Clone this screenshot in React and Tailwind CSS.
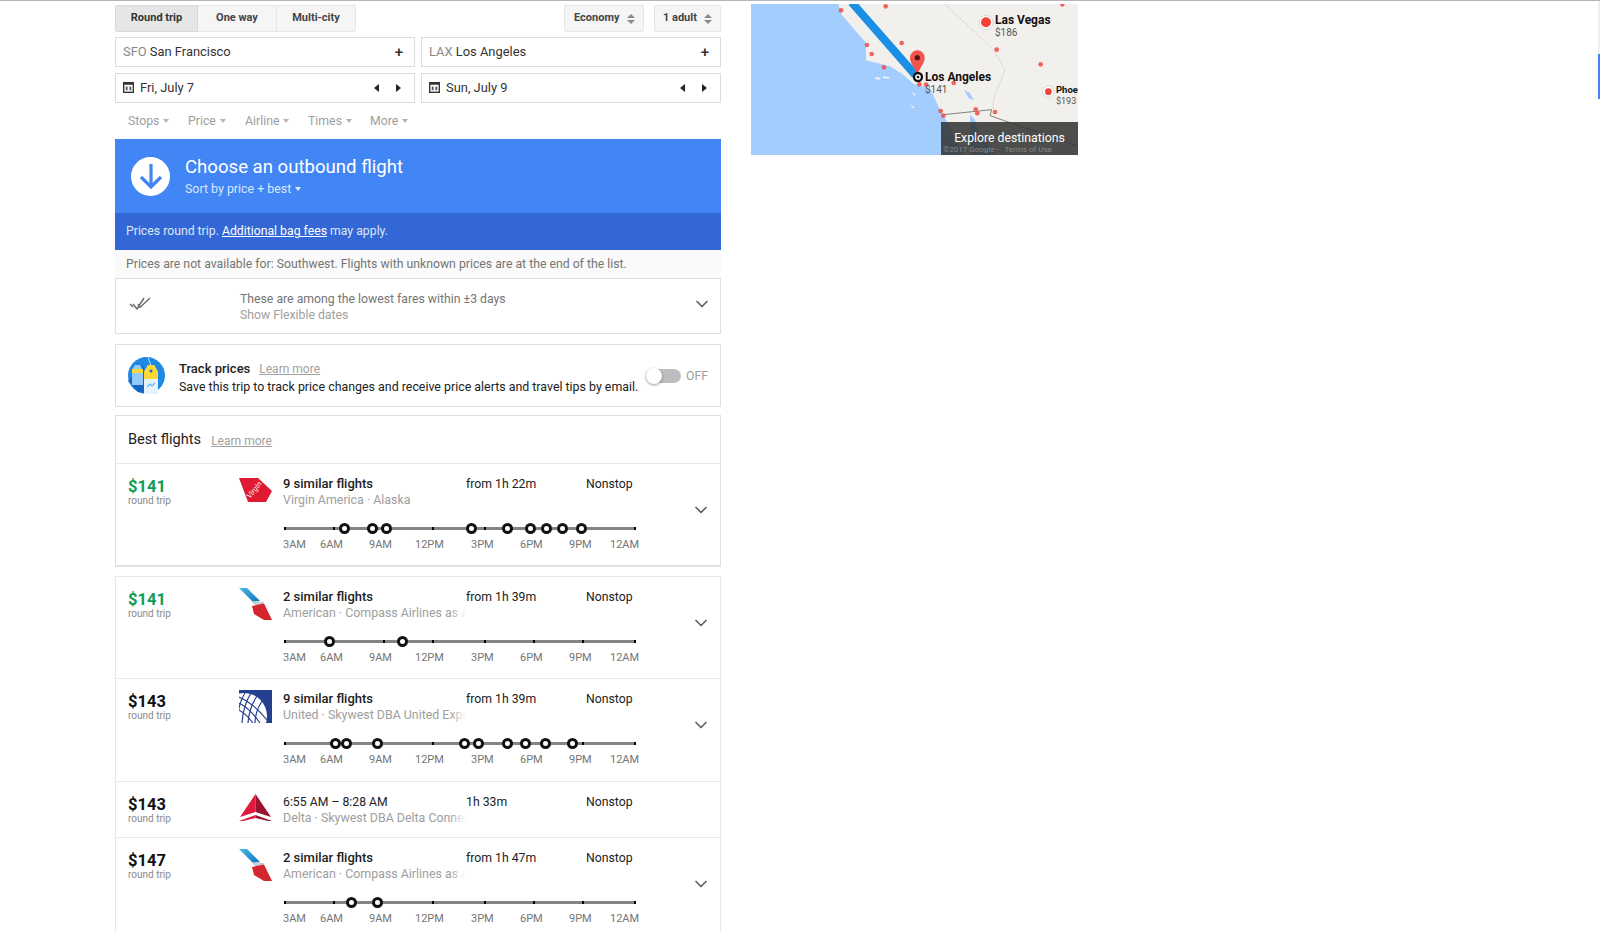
import React from 'react';
import { ChevronDown } from 'lucide-react';

const labelWidths = ['w-[37px]', 'w-[49px]', 'w-[46px]', 'w-[56px]', 'w-[49px]', 'w-[49px]', 'w-[41px]', 'w-[30px]'];
const labelNames = ['3AM', '6AM', '9AM', '12PM', '3PM', '6PM', '9PM', '12AM'];

const flights = [
  { price: '$141', green: true, logo: 'virgin', title: '9 similar flights', sub: 'Virgin America · Alaska', time: 'from 1h 22m', h: 'h-[101px]',
    ticks: [0, 49, 99, 148, 200, 249, 298, 350], stops: [60, 88, 102, 187, 223, 246, 262, 278, 297] },
  { price: '$141', green: true, logo: 'aa', title: '2 similar flights', sub: 'American · Compass Airlines as American Eagle', time: 'from 1h 39m', h: 'h-[102px]',
    ticks: [0, 99, 148, 200, 249, 298, 350], stops: [45, 118] },
  { price: '$143', logo: 'united', title: '9 similar flights', sub: 'United · Skywest DBA United Express', time: 'from 1h 39m', h: 'h-[103px]',
    ticks: [0, 148, 298, 350], stops: [51, 62, 93, 180, 194, 223, 241, 261, 288] },
  { price: '$143', logo: 'delta', title: '6:55 AM – 8:28 AM', sub: 'Delta · Skywest DBA Delta Connection', time: '1h 33m', h: 'h-[56px]' },
  { price: '$147', logo: 'aa', title: '2 similar flights', sub: 'American · Compass Airlines as American Eagle', time: 'from 1h 47m', h: 'h-[101px]',
    ticks: [0, 49, 148, 200, 249, 298, 350], stops: [67, 93] },
];

function VirginLogo() {
  return (
    <svg width="33" height="24" viewBox="0 0 33 24" className="mt-[3px]">
      <polygon points="0,0 19,0 33,13 27,24 9,24" fill="#e01933" />
      <text x="11" y="21" fontSize="8" fontStyle="italic" fill="#fff" fontFamily="'Liberation Serif', serif" transform="rotate(-52 11 21)">Virgin</text>
    </svg>
  );
}

function AaLogo() {
  return (
    <svg width="33" height="32" viewBox="0 0 33 32">
      <defs>
        <linearGradient id="aablue" x1="0" y1="0" x2="1" y2="1">
          <stop offset="0" stopColor="#4db8dc" />
          <stop offset="1" stopColor="#0f74c4" />
        </linearGradient>
      </defs>
      <polygon points="0,0 8,0 21,13 14,14" fill="url(#aablue)" />
      <polygon points="12,13 25,14 24,17 16,17" fill="#c9ced3" />
      <polygon points="13,18 25,15.5 33,32 25,32 15,26" fill="#d3262e" />
    </svg>
  );
}

function UnitedLogo() {
  return (
    <svg width="33" height="33" viewBox="0 0 33 33">
      <defs>
        <clipPath id="ualogo"><rect width="33" height="33" /></clipPath>
      </defs>
      <rect width="33" height="33" fill="#25408f" />
      <g clipPath="url(#ualogo)" fill="none">
        <circle cx="5" cy="26" r="23" fill="#fff" />
        <g stroke="#25408f" strokeWidth="1.2">
          <path d="M-6 5 Q12 10 28 30" />
          <path d="M-6 11 Q8 14 21 33" />
          <path d="M-6 18 Q4 20 14 33" />
          <path d="M12 3 Q4 16 3 33" />
          <path d="M18 6 Q10 18 9 33" />
          <path d="M23 11 Q16 22 16 33" />
          <path d="M6 3 Q-1 14 -2 33" />
        </g>
      </g>
    </svg>
  );
}

function DeltaLogo() {
  return (
    <svg width="33" height="28" viewBox="0 0 33 28" className="mt-[1px]">
      <polygon points="16.5,0 1,23 16.5,18" fill="#e01a3c" />
      <polygon points="16.5,0 32,23 16.5,18" fill="#98142f" />
      <polygon points="0,27 16.5,21 16.5,24 4,27" fill="#e01a3c" />
      <polygon points="33,27 16.5,21 16.5,24 29,27" fill="#98142f" />
    </svg>
  );
}

const logos = { virgin: VirginLogo, aa: AaLogo, united: UnitedLogo, delta: DeltaLogo };

function Timeline({ ticks, stops }) {
  return (
    <div className="mt-[15px]">
      <div className="relative w-[352px] h-[11px] ml-[1px]">
        <div className="absolute left-0 right-0 top-[4px] h-[3px] bg-[#848484]" />
        {ticks.map((t) => (
          <div key={t} className="absolute top-[4px] w-[2px] h-[3px] bg-black" style={{ left: t }} />
        ))}
        {stops.map((s) => (
          <div key={s} className="absolute top-0 w-[11px] h-[11px] rounded-full border-[3px] border-[#111] bg-white" style={{ left: s - 5 }} />
        ))}
      </div>
      <div className="flex mt-[4px] text-[11px] leading-[14px] text-[#757575]">
        {labelNames.map((l, i) => (
          <span key={l} className={`${labelWidths[i]} shrink-0`}>{l}</span>
        ))}
      </div>
    </div>
  );
}

function FlightRow({ f, last }) {
  const Logo = logos[f.logo];
  return (
    <div className={`flex relative pl-[12px] ${f.h} ${last ? '' : 'border-b border-[#e8e8e8]'}`}>
      <div className="w-[111px] shrink-0 pt-[14px]">
        <div className={`text-[16.5px] leading-[18px] font-bold ${f.green ? 'text-[#0f9d58]' : 'text-[#111]'}`}>{f.price}</div>
        <div className="mt-[-1px] text-[10px] leading-[12px] text-[#8a8a8a]">round trip</div>
      </div>
      <div className="w-[44px] shrink-0 pt-[11px]">
        <Logo />
      </div>
      <div className="flex-1 pt-[12px]">
        <div className="flex text-[12.25px] leading-[16px] text-[#222]">
          <div className={`w-[183px] shrink-0 ${f.logo === 'delta' ? '' : 'text-[13px] font-medium'}`}>{f.title}</div>
          <div className="w-[120px] shrink-0">{f.time}</div>
          <div>Nonstop</div>
        </div>
        <div className="relative w-[183px] mt-[-1px] pt-[1px] overflow-hidden whitespace-nowrap text-[12.4px] leading-[16px] text-[#9e9e9e]">
          {f.sub}
          <div className="absolute right-0 top-0 bottom-0 w-[16px] bg-gradient-to-r from-transparent to-white" />
        </div>
        {f.ticks && <Timeline ticks={f.ticks} stops={f.stops} />}
      </div>
      {f.ticks && (
        <ChevronDown size={20} strokeWidth={2} className="absolute right-[9px] top-[36px] text-[#5f5f5f]" />
      )}
    </div>
  );
}

function CalendarIcon() {
  return (
    <svg width="11" height="11" viewBox="0 0 12 12" className="shrink-0">
      <rect x="0.75" y="0.75" width="10.5" height="10.5" fill="#fff" stroke="#333" strokeWidth="1.5" />
      <rect x="1" y="1" width="10" height="2" fill="#333" />
      <rect x="3" y="5" width="2" height="4" fill="#555" />
      <rect x="7" y="5" width="2" height="4" fill="#555" />
    </svg>
  );
}

function Caret() {
  return <span className="inline-block ml-[4px] mb-[2px] w-0 h-0 border-x-[3.5px] border-x-transparent border-t-[4px] border-t-[#b5b5b5]" />;
}

function Arrows() {
  return (
    <div className="flex items-center gap-[17px]">
      <span className="w-0 h-0 border-y-[4px] border-y-transparent border-r-[5px] border-r-[#222]" />
      <span className="w-0 h-0 border-y-[4px] border-y-transparent border-l-[5px] border-l-[#222]" />
    </div>
  );
}

function Updown() {
  return (
    <div className="flex flex-col gap-[2px]">
      <span className="w-0 h-0 border-x-[4px] border-x-transparent border-b-[4px] border-b-[#8a8a8a]" />
      <span className="w-0 h-0 border-x-[4px] border-x-transparent border-t-[4px] border-t-[#8a8a8a]" />
    </div>
  );
}

function MapPanel() {
  const dots = [[333, 32], [467, 20], [411, 136], [425, 163], [515, 130], [462, 203], [568, 254], [588, 255], [671, 250], [632, 334], [640, 348], [737, 329], [742, 341], [795, 337], [800, 150], [932, 194], [997, 14]];
  return (
    <div className="relative w-[327px] h-[151px] overflow-hidden bg-[#a3ccff] text-[#111]">
      <svg width="327" height="151" viewBox="63 13 981 453" className="block">
        <polygon points="325,13 335,45 372,88 408,130 408,182 480,200 520,225 550,252 600,265 625,320 640,345 665,395 700,466 1044,466 1044,13" fill="#f2f0ec" />
        <polygon points="435,232 452,234 450,240 437,239" fill="#f2f0ec" />
        <polygon points="458,230 478,232 476,237 460,236" fill="#f2f0ec" />
        <polygon points="545,276 558,286 552,288" fill="#f2f0ec" />
        <polygon points="540,314 555,324 548,326" fill="#f2f0ec" />
        <polygon points="702,270 720,280 732,302 716,296" fill="#a3ccff" />
        <polygon points="720,345 735,360 745,395 800,466 720,466" fill="#a3ccff" />
        <path d="M645 13 L790 150 L825 210 L790 300 L790 330" fill="none" stroke="#c2c0bb" strokeWidth="2" strokeDasharray="6 3" />
        <path d="M640 345 L785 330 L780 348 L1044 440" fill="none" stroke="#6e6e6e" strokeWidth="2.5" />
        <line x1="365" y1="8" x2="556" y2="226" stroke="#1a8fe3" strokeWidth="24" />
        {dots.map(([x, y]) => (
          <circle key={`${x}-${y}`} cx={x} cy={y} r="7" fill="#ef5350" opacity="0.9" />
        ))}
        <circle cx="768" cy="68" r="21" fill="#fff" stroke="#c4c4c4" strokeWidth="2" />
        <circle cx="768" cy="68" r="15" fill="#f44336" />
        <circle cx="955" cy="276" r="17" fill="#fff" stroke="#c4c4c4" strokeWidth="2" />
        <circle cx="955" cy="276" r="10" fill="#f44336" />
        <path d="M562 225 C552 200 540 190 540 174 A22 22 0 0 1 584 174 C584 190 572 200 562 225 Z" fill="#f0544c" />
        <circle cx="562" cy="174" r="8" fill="#5a1410" />
        <circle cx="564" cy="232" r="12" fill="#fff" stroke="#111" strokeWidth="7" />
        <circle cx="564" cy="232" r="4" fill="#111" />
      </svg>
      <div className="absolute left-[244px] top-[10px] text-[12px] leading-[13px] font-bold">Las Vegas</div>
      <div className="absolute left-[244px] top-[23px] text-[10px] leading-[11px] text-[#555]">$186</div>
      <div className="absolute left-[174px] top-[66px] text-[12px] leading-[14px] font-bold">Los Angeles</div>
      <div className="absolute left-[174px] top-[80px] text-[10px] leading-[11px] text-[#555]">$141</div>
      <div className="absolute left-[305px] top-[80px] text-[9.5px] leading-[12px] font-bold">Phoe</div>
      <div className="absolute left-[305px] top-[92px] text-[9px] leading-[11px] text-[#555]">$193</div>
      <div className="absolute left-[190px] right-0 bottom-0 h-[33px] bg-[#303030]/85 flex justify-center pt-[8px] text-white text-[12.25px] leading-[16px]">
        Explore destinations
      </div>
      <div className="absolute left-[192px] right-0 bottom-0 h-[10px] text-[8px] leading-[10px] text-[#888] whitespace-nowrap">©2017 Google - &nbsp; Terms of Use</div>
    </div>
  );
}

export default function App() {
  return (
    <div className="relative w-[1600px] h-[932px] overflow-hidden bg-white border-t border-[#b5b5b5] font-['Roboto',sans-serif]">
      {/* scrollbar stub on the right edge */}
      <div className="absolute right-0 top-0 w-[2px] h-[53px] bg-[#efefef]" />
      <div className="absolute right-0 top-[53px] w-[2px] h-[45px] bg-[#4285f4]" />

      <div className="flex items-start pl-[115px]">
        <div className="w-[606px] shrink-0 pt-[4px]">
          {/* trip type + cabin */}
          <div className="flex justify-between h-[27px] text-[11px] font-bold text-[#444]">
            <div className="flex">
              <div className="w-[83px] flex items-center justify-center bg-[#e6e6e6] border border-[#d8d8d8] rounded-l-[2px] text-[#333]">Round trip</div>
              <div className="w-[79px] flex items-center justify-center bg-[#f5f5f5] border-y border-r border-[#e6e6e6]">One way</div>
              <div className="w-[79px] flex items-center justify-center bg-[#f5f5f5] border-y border-r border-[#e6e6e6] rounded-r-[2px]">Multi-city</div>
            </div>
            <div className="flex gap-[10px]">
              <div className="w-[80px] flex items-center justify-between pl-[9px] pr-[8px] bg-[#f5f5f5] border border-[#e6e6e6] rounded-[2px]">Economy <Updown /></div>
              <div className="w-[67px] flex items-center justify-between pl-[8px] pr-[8px] bg-[#f5f5f5] border border-[#e6e6e6] rounded-[2px]">1 adult <Updown /></div>
            </div>
          </div>

          {/* from / to */}
          <div className="flex gap-[6px] mt-[5px] text-[12.9px] text-[#333]">
            <div className="w-[300px] h-[30px] flex items-center justify-between pl-[7px] pr-[11px] border border-[#dcdcdc]">
              <div><span className="text-[#888]">SFO</span> San Francisco</div>
              <span className="text-[15px] font-medium">+</span>
            </div>
            <div className="w-[300px] h-[30px] flex items-center justify-between pl-[7px] pr-[11px] border border-[#dcdcdc]">
              <div><span className="text-[#888]">LAX</span> Los Angeles</div>
              <span className="text-[15px] font-medium">+</span>
            </div>
          </div>
          <div className="flex gap-[6px] mt-[6px] text-[12.9px] text-[#333]">
            <div className="w-[300px] h-[30px] flex items-center justify-between pl-[7px] pr-[13px] border border-[#dcdcdc]">
              <div className="flex items-center gap-[6px]"><CalendarIcon /> Fri, July 7</div>
              <Arrows />
            </div>
            <div className="w-[300px] h-[30px] flex items-center justify-between pl-[7px] pr-[13px] border border-[#dcdcdc]">
              <div className="flex items-center gap-[6px]"><CalendarIcon /> Sun, July 9</div>
              <Arrows />
            </div>
          </div>

          {/* filters */}
          <div className="flex h-[36px] items-center pl-[13px] text-[12.3px] text-[#9e9e9e]">
            <div className="w-[60px]">Stops<Caret /></div>
            <div className="w-[57px]">Price<Caret /></div>
            <div className="w-[63px]">Airline<Caret /></div>
            <div className="w-[62px]">Times<Caret /></div>
            <div>More<Caret /></div>
          </div>

          {/* header */}
          <div className="h-[74px] bg-[#4285f4] flex items-center pl-[16px] text-white">
            <div className="w-[39px] h-[39px] rounded-full bg-white flex items-center justify-center shrink-0">
              <svg width="24" height="28" viewBox="0 0 24 28" fill="none" stroke="#4285f4" strokeWidth="3.2">
                <path d="M12 2 V25" />
                <path d="M2 15 L12 25 L22 15" />
              </svg>
            </div>
            <div className="ml-[15px]">
              <div className="text-[18.6px] leading-[26px]">Choose an outbound flight</div>
              <div className="text-[12.4px] leading-[18px] text-[#d9e6fd]">
                Sort by price + best
                <span className="inline-block ml-[4px] mb-[2px] w-0 h-0 border-x-[3.5px] border-x-transparent border-t-[4px] border-t-[#e3ecfd]" />
              </div>
            </div>
          </div>
          <div className="h-[37px] bg-[#3367d6] flex items-center pl-[11px] text-[12.25px] text-[#dce6fa]">
            Prices round trip.&nbsp;<span className="text-white underline">Additional bag fees</span>&nbsp;may apply.
          </div>
          <div className="h-[28px] bg-[#fafafa] flex items-center pl-[11px] text-[12.25px] text-[#757575]">
            Prices are not available for: Southwest. Flights with unknown prices are at the end of the list.
          </div>

          {/* flexible dates */}
          <div className="relative h-[56px] flex border border-[#e0e0e0] pl-[13px]">
            <svg width="22" height="14" viewBox="0 0 22 14" fill="none" stroke="#6a6a6a" strokeWidth="1.4" className="mt-[18px] shrink-0">
              <path d="M1 7 L4 10" />
              <path d="M4 7 L8 12 L15 1" />
              <path d="M9 7 L11 10.5 L21 1" />
            </svg>
            <div className="ml-[89px] pt-[13px] text-[12.25px] leading-[15.5px]">
              <div className="text-[#757575]">These are among the lowest fares within ±3 days</div>
              <div className="text-[#a0a0a0]">Show Flexible dates</div>
            </div>
            <ChevronDown size={20} strokeWidth={2} className="absolute right-[8px] top-[15px] text-[#5f5f5f]" />
          </div>

          {/* track prices */}
          <div className="relative h-[63px] mt-[10px] flex items-center border border-[#e0e0e0] pl-[12px]">
            <svg width="37" height="37" viewBox="0 0 37 37" className="shrink-0">
              <circle cx="18.5" cy="18.5" r="18.5" fill="#1e88e5" />
              <polygon points="0,24 14,8 27,37 10,35" fill="#1565c0" />
              <path d="M20 0 L23 9" stroke="#bbdefb" strokeWidth="1" />
              <polygon points="7,8 12,8 15,13 15,28 4,28 4,13" fill="#90caf9" />
              <rect x="4" y="12" width="11" height="4" fill="#fdd835" />
              <polygon points="20,8 26,8 30,15 30,37 16,37 16,15" fill="#e3f2fd" />
              <polygon points="20,8 26,8 30,15 30,22 16,22 16,15" fill="#fdd835" />
              <circle cx="23" cy="14" r="1.5" fill="#1565c0" />
              <path d="M19 30 L22 27 L24 29 L27 26" fill="none" stroke="#64b5f6" strokeWidth="1.2" />
            </svg>
            <div className="ml-[14px] pt-[3px] text-[12.4px] leading-[17px] text-[#222]">
              <div><span className="text-[13px] font-medium">Track prices</span><span className="ml-[9px] text-[12px] text-[#a0a0a0] underline">Learn more</span></div>
              <div>Save this trip to track price changes and receive price alerts and travel tips by email.</div>
            </div>
            <div className="absolute left-[530px] top-[22px] flex items-center">
              <div className="relative w-[35px] h-[14px] rounded-full bg-[#bdbdbd]">
                <div className="absolute left-0 top-[-1px] w-[16px] h-[16px] rounded-full bg-white shadow-[0_1px_3px_rgba(0,0,0,0.4)]" />
              </div>
              <span className="ml-[5px] text-[12.25px] text-[#9e9e9e]">OFF</span>
            </div>
          </div>

          {/* best flights */}
          <div className="mt-[8px] border border-[#e0e0e0] border-b-2">
            <div className="h-[48px] flex items-center pl-[12px] border-b border-[#e8e8e8]">
              <span className="text-[14.6px] text-[#222]">Best flights</span>
              <span className="ml-[10px] mt-[2px] text-[12px] text-[#a0a0a0] underline">Learn more</span>
            </div>
            <FlightRow f={flights[0]} last />
          </div>

          <div className="mt-[9px] border-x border-t border-[#e8e8e8]">
            {flights.slice(1).map((f) => (
              <FlightRow key={f.price + f.time} f={f} />
            ))}
          </div>
        </div>

        <div className="ml-[30px] mt-[3px] shrink-0">
          <MapPanel />
        </div>
      </div>
    </div>
  );
}
